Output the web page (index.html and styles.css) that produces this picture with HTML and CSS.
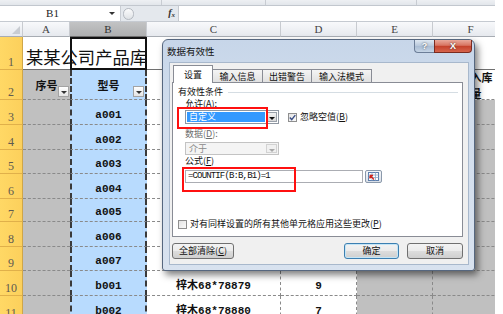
FILE: index.html
```html
<!DOCTYPE html>
<html lang="zh">
<head>
<meta charset="utf-8">
<title>数据有效性</title>
<link rel="stylesheet" href="styles.css">
</head>
<body>
<div class="app">
  <div class="ribbon"><span class="rs1"></span><span class="rs2"></span><span class="rs3"></span></div>
  <div class="fbar">
    <div class="namebox"><span class="nb-text">B1</span><span class="nb-arrow"></span></div>
    <div class="fbtns"><span class="expander"></span><span class="fx">f<sub>x</sub></span></div>
    <div class="finput"></div>
  </div>
  <div class="sheet-wrap">
    <div class="sheet">
      <div class="h corner"><span class="corner-tri"></span></div>
      <div class="h">A</div>
      <div class="h hsel">B</div>
      <div class="h">C</div>
      <div class="h">D</div>
      <div class="h">E</div>
      <div class="h">F</div>

      <div class="rh">1</div>
      <div class="r1 a1"><span class="title-text">某某公司产品库</span></div>
      <div class="r1 b1"></div>
      <div class="r1"></div>
      <div class="r1"></div>
      <div class="r1"></div>
      <div class="r1"></div>

      <div class="rh">2</div>
      <div class="c g hd">序号<span class="filt"></span></div>
      <div class="c b hd">型号<span class="filt"></span></div>
      <div class="c w hd"></div>
      <div class="c w hd"></div>
      <div class="c w hd"></div>
      <div class="c w hd f2"><span class="l1">产品入库</span><span class="l2">数量</span></div>

      <div class="rh">3</div><div class="c g"></div><div class="c b">a001</div><div class="c w"></div><div class="c w"></div><div class="c g"></div><div class="c g"></div>
      <div class="rh">4</div><div class="c g"></div><div class="c b">a002</div><div class="c w"></div><div class="c w"></div><div class="c g"></div><div class="c g"></div>
      <div class="rh">5</div><div class="c g"></div><div class="c b">a003</div><div class="c w"></div><div class="c w"></div><div class="c g"></div><div class="c g"></div>
      <div class="rh">6</div><div class="c g"></div><div class="c b">a004</div><div class="c w"></div><div class="c w"></div><div class="c g"></div><div class="c g"></div>
      <div class="rh">7</div><div class="c g"></div><div class="c b">a005</div><div class="c w"></div><div class="c w"></div><div class="c g"></div><div class="c g"></div>
      <div class="rh">8</div><div class="c g"></div><div class="c b">a006</div><div class="c w"></div><div class="c w"></div><div class="c g"></div><div class="c g"></div>
      <div class="rh">9</div><div class="c g"></div><div class="c b">a007</div><div class="c w"></div><div class="c w"></div><div class="c g"></div><div class="c g"></div>
      <div class="rh">10</div><div class="c g"></div><div class="c b">b001</div><div class="c w">梓木68*78879</div><div class="c w">9</div><div class="c g"></div><div class="c g"></div>
      <div class="rh">11</div><div class="c g"></div><div class="c b">b002</div><div class="c w">梓木68*78880</div><div class="c w">7</div><div class="c g"></div><div class="c g"></div>
    </div>
  </div>
</div>

<div class="dialog">
  <div class="titlebar">
    <span class="title">数据有效性</span>
    <div class="capbtns"><span class="help">?</span><span class="close">X</span></div>
  </div>
  <div class="client">
    <div class="tabs">
      <span class="tab active">设置</span>
      <span class="tab">输入信息</span>
      <span class="tab">出错警告</span>
      <span class="tab">输入法模式</span>
    </div>
    <div class="panel">
      <div class="group-head"><span>有效性条件</span><span class="gline"></span></div>
      <div class="indent">
        <div class="lbl">允许(<u>A</u>):</div>
        <div class="row">
          <div class="combo"><span class="combo-val">自定义</span><span class="combo-btn"><span class="tri"></span></span></div>
          <span class="chk checked"><svg width="7" height="7" viewBox="0 0 7 7"><path d="M0.8 3.6 L2.7 5.6 L6.3 1.1" fill="none" stroke="#3b4f86" stroke-width="1.4"/></svg></span>
          <span class="chk-lbl">忽略空值(<u>B</u>)</span>
        </div>
        <div class="lbl lbl-dis lbl2">数据(<u>D</u>):</div>
        <div class="combo dis"><span class="combo-val">介于</span><span class="combo-btn"><span class="tri"></span></span></div>
        <div class="lbl lbl3">公式(<u>F</u>)</div>
        <div class="row row-f">
          <div class="formula">=COUNTIF(B:B,B1)=1</div>
          <span class="refbtn"><svg width="11" height="9" viewBox="0 0 11 9"><rect x="0.5" y="0.5" width="10" height="8" fill="#fff" stroke="#5d7fae"/><path d="M0.5 3 H10.5 M0.5 5.5 H10.5 M4 0.5 V8.5 M7.5 0.5 V8.5" stroke="#8fa8c8" stroke-width="0.8"/><path d="M6 7.5 L2 3.5 M2 3.5 H5 M2 3.5 V6.5" stroke="#d2241c" stroke-width="1.3" fill="none"/></svg></span>
        </div>
      </div>
      <div class="row row-all">
        <span class="chk"></span>
        <span class="chk-lbl">对有同样设置的所有其他单元格应用这些更改(<u>P</u>)</span>
      </div>
      <span class="redbox rb1"></span>
      <span class="redbox rb2"></span>
    </div>
    <div class="buttons">
      <span class="btn btn-clear">全部清除(<u>C</u>)</span>
      <span class="spacer"></span>
      <span class="btn btn-ok">确定</span>
      <span class="btn btn-cancel">取消</span>
    </div>
  </div>
</div>
</body>
</html>
```

FILE: styles.css
```css
* { box-sizing: border-box; }
html, body { margin: 0; padding: 0; }
body {
  width: 503px;
  height: 314px;
  overflow: hidden;
  background: #fff;
  position: relative;
  font-family: "Noto Sans CJK SC", sans-serif;
}
.app { width: 495px; display: flex; flex-direction: column; }

/* ribbon bottom strip */
.ribbon {
  height: 6px;
  background: linear-gradient(#eef0f3, #e2e6eb);
  border-bottom: 1px solid #c2c7ce;
  display: flex;
}
.ribbon span { border-right: 1px solid #c8ccd2; height: 5px; }
.rs1 { width: 162px; }
.rs2 { width: 104px; }
.rs3 { width: 151px; }

/* formula bar */
.fbar {
  height: 16px;
  display: flex;
  background: #e4e8ed;
  border-bottom: 1px solid #c5cad1;
}
.namebox {
  width: 121px;
  background: #fff;
  display: flex;
  align-items: center;
  border-right: 1px solid #c9cdd3;
}
.nb-text {
  flex: 1;
  text-align: center;
  font: 11px "Liberation Serif", serif;
  color: #222;
  line-height: 15px;
}
.nb-arrow {
  width: 15px;
  height: 15px;
  position: relative;
}
.nb-arrow::after {
  content: "";
  position: absolute;
  left: 4px;
  top: 6px;
  border-left: 3px solid transparent;
  border-right: 3px solid transparent;
  border-top: 3px solid #333;
}
.fbtns {
  width: 57px;
  display: flex;
  align-items: center;
  justify-content: space-between;
  padding: 0 3px 0 2px;
}
.expander {
  width: 11px;
  height: 12px;
  border: 1px solid #b4b9c0;
  border-radius: 6px;
  background: linear-gradient(#fbfbfc, #dfe2e6);
}
.fx {
  font: italic bold 10px "Liberation Serif", serif;
  color: #333;
  line-height: 10px;
}
.fx sub { font-size: 7px; vertical-align: -1px; }
.finput { flex: 1; background: #fff; border-left: 1px solid #c5c9cf; }

/* sheet */
.sheet-wrap { width: 495px; overflow: hidden; }
.sheet {
  width: 509px;
  display: grid;
  grid-template-columns: 23px 47px 77px 134px 76px 76px 76px;
  grid-template-rows: 15px 33px 30px 25px 25px 24px 25px 23px 25px 24px 25px 25px;
}
.h {
  background: linear-gradient(#f8f9fb, #e6e9ee);
  border-right: 1px solid #c8cbd0;
  border-bottom: 1px solid #a7acb3;
  display: flex;
  align-items: center;
  justify-content: center;
  font: 11px "Liberation Serif", serif;
  color: #444;
}
.h.hsel {
  background: linear-gradient(#c2c3c4, #aeafb0);
  border-bottom: 1px solid #6d6d6d;
  color: #333;
}
.corner { position: relative; }
.corner-tri {
  position: absolute;
  right: 2px;
  bottom: 2px;
  border-left: 8px solid transparent;
  border-bottom: 8px solid #c8ccd2;
}
.rh {
  background: linear-gradient(90deg, #ffd865, #fcd05c);
  border-right: 1px solid #cfa648;
  border-bottom: 1px solid #e0b04a;
  display: flex;
  align-items: flex-end;
  justify-content: center;
  font: 12px "Liberation Serif", serif;
  color: #5e5a50;
  line-height: 14px;
}
.r1 {
  border-bottom: 1px solid #707070;
  background: #fff;
}
.a1 { position: relative; z-index: 1; background: transparent; }
.title-text {
  position: absolute;
  left: 3px;
  bottom: 0;
  white-space: nowrap;
  font: 17.3px "Noto Sans CJK SC", sans-serif;
  line-height: 24px;
  color: #111;
}
.b1 {
  border: 2px solid #111;
  background: transparent;
}
.c {
  border-right: 1px dashed #8a8a8a;
  border-bottom: 1px dashed #8a8a8a;
  display: flex;
  align-items: flex-end;
  justify-content: center;
  padding-bottom: 2px;
  font: bold 11px "Liberation Mono", "Noto Sans CJK SC", monospace;
  color: #111;
  line-height: 13px;
  position: relative;
}
.c.hd { align-items: center; padding-bottom: 0; font: bold 11px "Noto Sans CJK SC", sans-serif; }
.g { background: #c0c0c0; }
.g:nth-child(7n+2) { border-right: none; }
.b {
  background: #b8dbfe;
  border-left: 2px dashed #3a3a3a;
  border-right: 2px dashed #3a3a3a;
}
.w { background: #fff; }
.f2 { flex-direction: column; line-height: 12px; }
.filt {
  position: absolute;
  right: 1px;
  bottom: 2px;
  width: 11px;
  height: 11px;
  border: 1px solid #a3a3a3;
  background: linear-gradient(#ffffff, #e4e4e4);
}
.filt::after {
  content: "";
  position: absolute;
  left: 2px;
  top: 4px;
  border-left: 3px solid transparent;
  border-right: 3px solid transparent;
  border-top: 3px solid #333;
}

/* dialog */
.dialog {
  position: absolute;
  left: 162px;
  top: 39px;
  width: 313px;
  height: 232px;
  border: 1px solid #56677f;
  border-radius: 6px 6px 3px 3px;
  background: linear-gradient(180deg, #c7d6e9 0%, #d2deed 35%, #d8e2ef 100%);
  box-shadow: 3px 4px 7px rgba(0, 0, 0, 0.5);
  padding: 0 5px 5px 6px;
  display: flex;
  flex-direction: column;
  font-family: "Noto Sans CJK SC", sans-serif;
  font-size: 9px;
  color: #111;
  z-index: 5;
}
.titlebar {
  height: 22px;
  display: flex;
  justify-content: space-between;
  align-items: flex-start;
}
.title { margin-left: -2px; margin-top: 5px; line-height: 12px; font-size: 9.5px; }
.capbtns { display: flex; margin-right: -3px; }
.help, .close {
  height: 13px;
  display: flex;
  align-items: center;
  justify-content: center;
  font: bold 9px "Liberation Sans", sans-serif;
  color: #fff;
  text-shadow: 0 0 2px #333;
}
.help {
  width: 20px;
  border: 1px solid #6c7e98;
  border-top: none;
  border-right: none;
  border-radius: 0 0 0 4px;
  background: linear-gradient(#dfe8f2, #b7c7db 50%, #a9bcd3 51%, #c6d5e6);
}
.close {
  width: 38px;
  border: 1px solid #7a2b20;
  border-top: none;
  border-radius: 0 0 4px 0;
  background: linear-gradient(#e9a99b, #d87461 45%, #c4402a 50%, #d6644c);
}
.client {
  flex: 1;
  background: #f0f0f0;
  border: 1px solid #a8b8cc;
  display: flex;
  flex-direction: column;
}
.tabs {
  height: 19px;
  display: flex;
  align-items: flex-end;
  padding-left: 3px;
  position: relative;
  z-index: 2;
}
.tab {
  height: 13px;
  border: 1px solid #898c95;
  border-bottom: none;
  border-left: none;
  background: linear-gradient(#f4f4f4, #e1e1e1);
  display: flex;
  align-items: center;
  justify-content: center;
  line-height: 11px;
}
.tab:nth-child(1) { width: 40px; }
.tab:nth-child(2) { width: 50px; }
.tab:nth-child(3) { width: 49px; }
.tab:nth-child(4) { width: 60px; }
.tab.active {
  height: 18px;
  margin-bottom: -1px;
  border-left: 1px solid #898c95;
  background: #fff;
  align-items: flex-start;
  padding-top: 3px;
}
.panel {
  margin-left: 2px;
  width: 291px;
  height: 155px;
  border: 1px solid #898c95;
  background: #fff;
  position: relative;
  padding: 3px 0 0 5px;
  display: flex;
  flex-direction: column;
}
.group-head {
  height: 12px;
  display: flex;
  align-items: center;
  line-height: 12px;
}
.gline { flex: 1; border-top: 1px solid #d5dde3; margin: 1px 4px 0 5px; }
.indent { margin-left: 7px; display: flex; flex-direction: column; }
.lbl { height: 12px; line-height: 12px; }
.lbl-dis { color: #6d6d6d; }
.lbl2 { margin-top: 4px; }
.lbl3 { height: 10px; line-height: 10px; margin-top: 1px; }
.row { display: flex; align-items: center; }
.indent > .row:first-of-type { margin-top: 3px; }
.combo {
  width: 94px;
  height: 14px;
  border: 1px solid #8e96a1;
  background: #fff;
  display: flex;
  padding: 1px;
}
.combo-val {
  flex: 1;
  background: #3399ff;
  color: #fff;
  line-height: 10px;
  padding-left: 2px;
  margin-right: 1px;
}
.combo-btn {
  width: 11px;
  border: 1px solid #9aa1aa;
  background: linear-gradient(#f2f2f2, #d9d9d9);
  position: relative;
}
.tri {
  position: absolute;
  left: 2px;
  top: 4px;
  border-left: 3px solid transparent;
  border-right: 3px solid transparent;
  border-top: 3px solid #111;
}
.combo.dis {
  margin-top: 2px;
  height: 13px;
  border-color: #c3c3c3;
  background: #f4f4f4;
}
.combo.dis .combo-val { background: transparent; color: #8a8a8a; line-height: 9px; }
.combo.dis .combo-btn { border-color: #d2d2d2; background: #f0f0f0; }
.combo.dis .tri { border-top-color: #a8a8a8; }
.chk {
  width: 9px;
  height: 9px;
  border: 1px solid #8f8f8f;
  background: linear-gradient(135deg, #e4e4e4, #fafafa);
  display: flex;
  align-items: center;
  justify-content: center;
}
.row .chk.checked { margin-left: 9px; }
.chk-lbl { margin-left: 3px; line-height: 12px; }
.row-f { margin-top: 4px; }
.formula {
  width: 178px;
  height: 13px;
  border: 1px solid #abadb3;
  background: #fff;
  font: 9px "Liberation Mono", monospace;
  letter-spacing: -0.85px;
  line-height: 11px;
  padding-left: 2px;
  color: #111;
}
.refbtn {
  margin-left: 2px;
  width: 17px;
  height: 13px;
  border: 1px solid #8b99ab;
  border-radius: 2px;
  background: linear-gradient(#f5f7fa, #d9dfe7);
  display: flex;
  align-items: center;
  justify-content: center;
}
.row-all { margin-top: 35px; }
.redbox {
  position: absolute;
  border: 2px solid #ff1010;
}
.rb1 { left: 4px; top: 24px; width: 91px; height: 22px; }
.rb2 { left: 9px; top: 84px; width: 114px; height: 25px; }
.buttons {
  margin-top: 6px;
  display: flex;
  padding: 0 5px 0 2px;
}
.spacer { flex: 1; }
.btn {
  height: 16px;
  border: 1px solid #707070;
  border-radius: 3px;
  background: linear-gradient(#f3f3f3 0%, #ebebeb 50%, #dddddd 51%, #cfcfcf 100%);
  display: flex;
  align-items: center;
  justify-content: center;
  line-height: 12px;
}
.btn-clear { width: 62px; }
.btn-ok {
  width: 55px;
  border-color: #3c7fb1;
  box-shadow: inset 0 0 0 1px #c4e5f6;
}
.btn-cancel { width: 56px; margin-left: 8px; }
```
